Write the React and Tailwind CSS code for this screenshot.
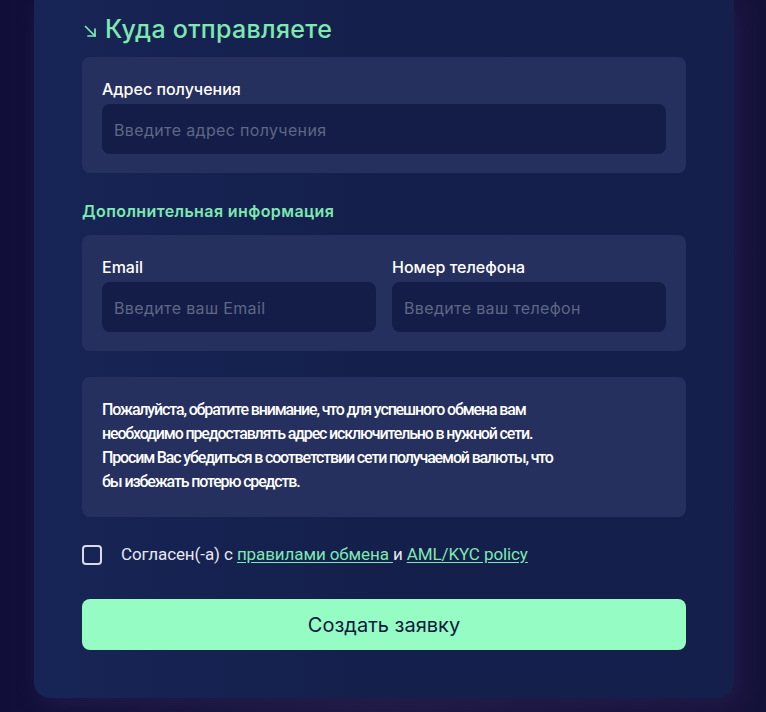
import React from "react";

const font = { fontFamily: "Inter, 'Noto Sans', sans-serif" };

function Field({ label, placeholder }) {
  return (
    <div className="flex flex-col flex-1 min-w-0">
      <div className="text-[16px] leading-[20px] font-medium text-white">{label}</div>
      <div className="mt-[5px] h-[50px] rounded-lg bg-[#141d48] flex items-center px-[12px] pt-[2px]">
        <span className="text-[16px] text-[#5e6785] tracking-[0.35px]">{placeholder}</span>
      </div>
    </div>
  );
}

export default function App() {
  return (
    <div className="w-[766px] h-[712px] overflow-hidden bg-[#110f3a]" style={font}>
      <div className="w-[766px] h-[712px] bg-gradient-to-r from-[#110f3a] via-[#1e1a44] to-[#15123a] pl-[34px]">
        <div className="relative w-[700px] h-[698px] rounded-b-[16px] bg-gradient-to-r from-[#172556] via-[#141f4b] to-[#141f4b] px-[48px] pt-[14px] shadow-[6px_8px_20px_rgba(40,30,80,0.6)]">
          <div className="flex items-center h-[32px] text-[25px] font-medium text-[#7ee8b1] tracking-[0.3px]">
            <svg width="13" height="13" viewBox="0 0 13 13" className="ml-[2px] mr-[8px] mt-[2px]" fill="none" stroke="#7ee8b1" strokeWidth="1.7" strokeLinecap="round" strokeLinejoin="round">
              <path d="M1.5 1.5 L11 11" />
              <path d="M11 4 V11 H4" />
            </svg>
            Куда отправляете
          </div>

          <div className="mt-[11px] rounded-lg bg-[#26305f] px-[20px] pt-[22px] pb-[19px]">
            <Field label="Адрес получения" placeholder="Введите адрес получения" />
          </div>

          <div className="mt-[28px] text-[16px] leading-[20px] font-semibold text-[#7ee8b1] tracking-[0.4px]">
            Дополнительная информация
          </div>

          <div className="mt-[14px] rounded-lg bg-[#26305f] px-[20px] pt-[22px] pb-[19px] flex gap-[16px]">
            <Field label="Email" placeholder="Введите ваш Email" />
            <Field label="Номер телефона" placeholder="Введите ваш телефон" />
          </div>

          <div className="mt-[26px] rounded-lg bg-[#26305f] px-[20px] pt-[21px] pb-[23px] text-[16px] leading-[24px] font-medium text-white" style={{ fontFamily: "Roboto, 'Noto Sans', sans-serif", letterSpacing: "-1.15px" }}>
            <div className="whitespace-nowrap">Пожалуйста, обратите внимание, что для успешного обмена вам</div>
            <div className="whitespace-nowrap">необходимо предоставлять адрес исключительно в нужной сети.</div>
            <div className="whitespace-nowrap">Просим Вас убедиться в соответствии сети получаемой валюты, что</div>
            <div className="whitespace-nowrap">бы избежать потерю средств.</div>
          </div>

          <div className="mt-[28px] flex items-center h-[20px]">
            <div className="w-[20px] h-[20px] rounded-[4px] border-2 border-[#d8dbe6]" />
            <div className="ml-[19px] text-[17px] text-[#e6e8f0] whitespace-nowrap" style={{ fontFamily: "Roboto, 'Noto Sans', sans-serif", letterSpacing: "-0.1px" }}>
              Согласен(-а) с{" "}
              <span className="text-[#7ee8b1] underline underline-offset-2">правилами обмена </span>
              и{" "}
              <span className="text-[#7ee8b1] underline underline-offset-2">AML/KYC policy</span>
            </div>
          </div>

          <div className="mt-[34px] h-[51px] rounded-lg bg-[#95fcc4] flex items-center justify-center text-[20px] text-[#10193d]">
            Создать заявку
          </div>
        </div>
      </div>
    </div>
  );
}
